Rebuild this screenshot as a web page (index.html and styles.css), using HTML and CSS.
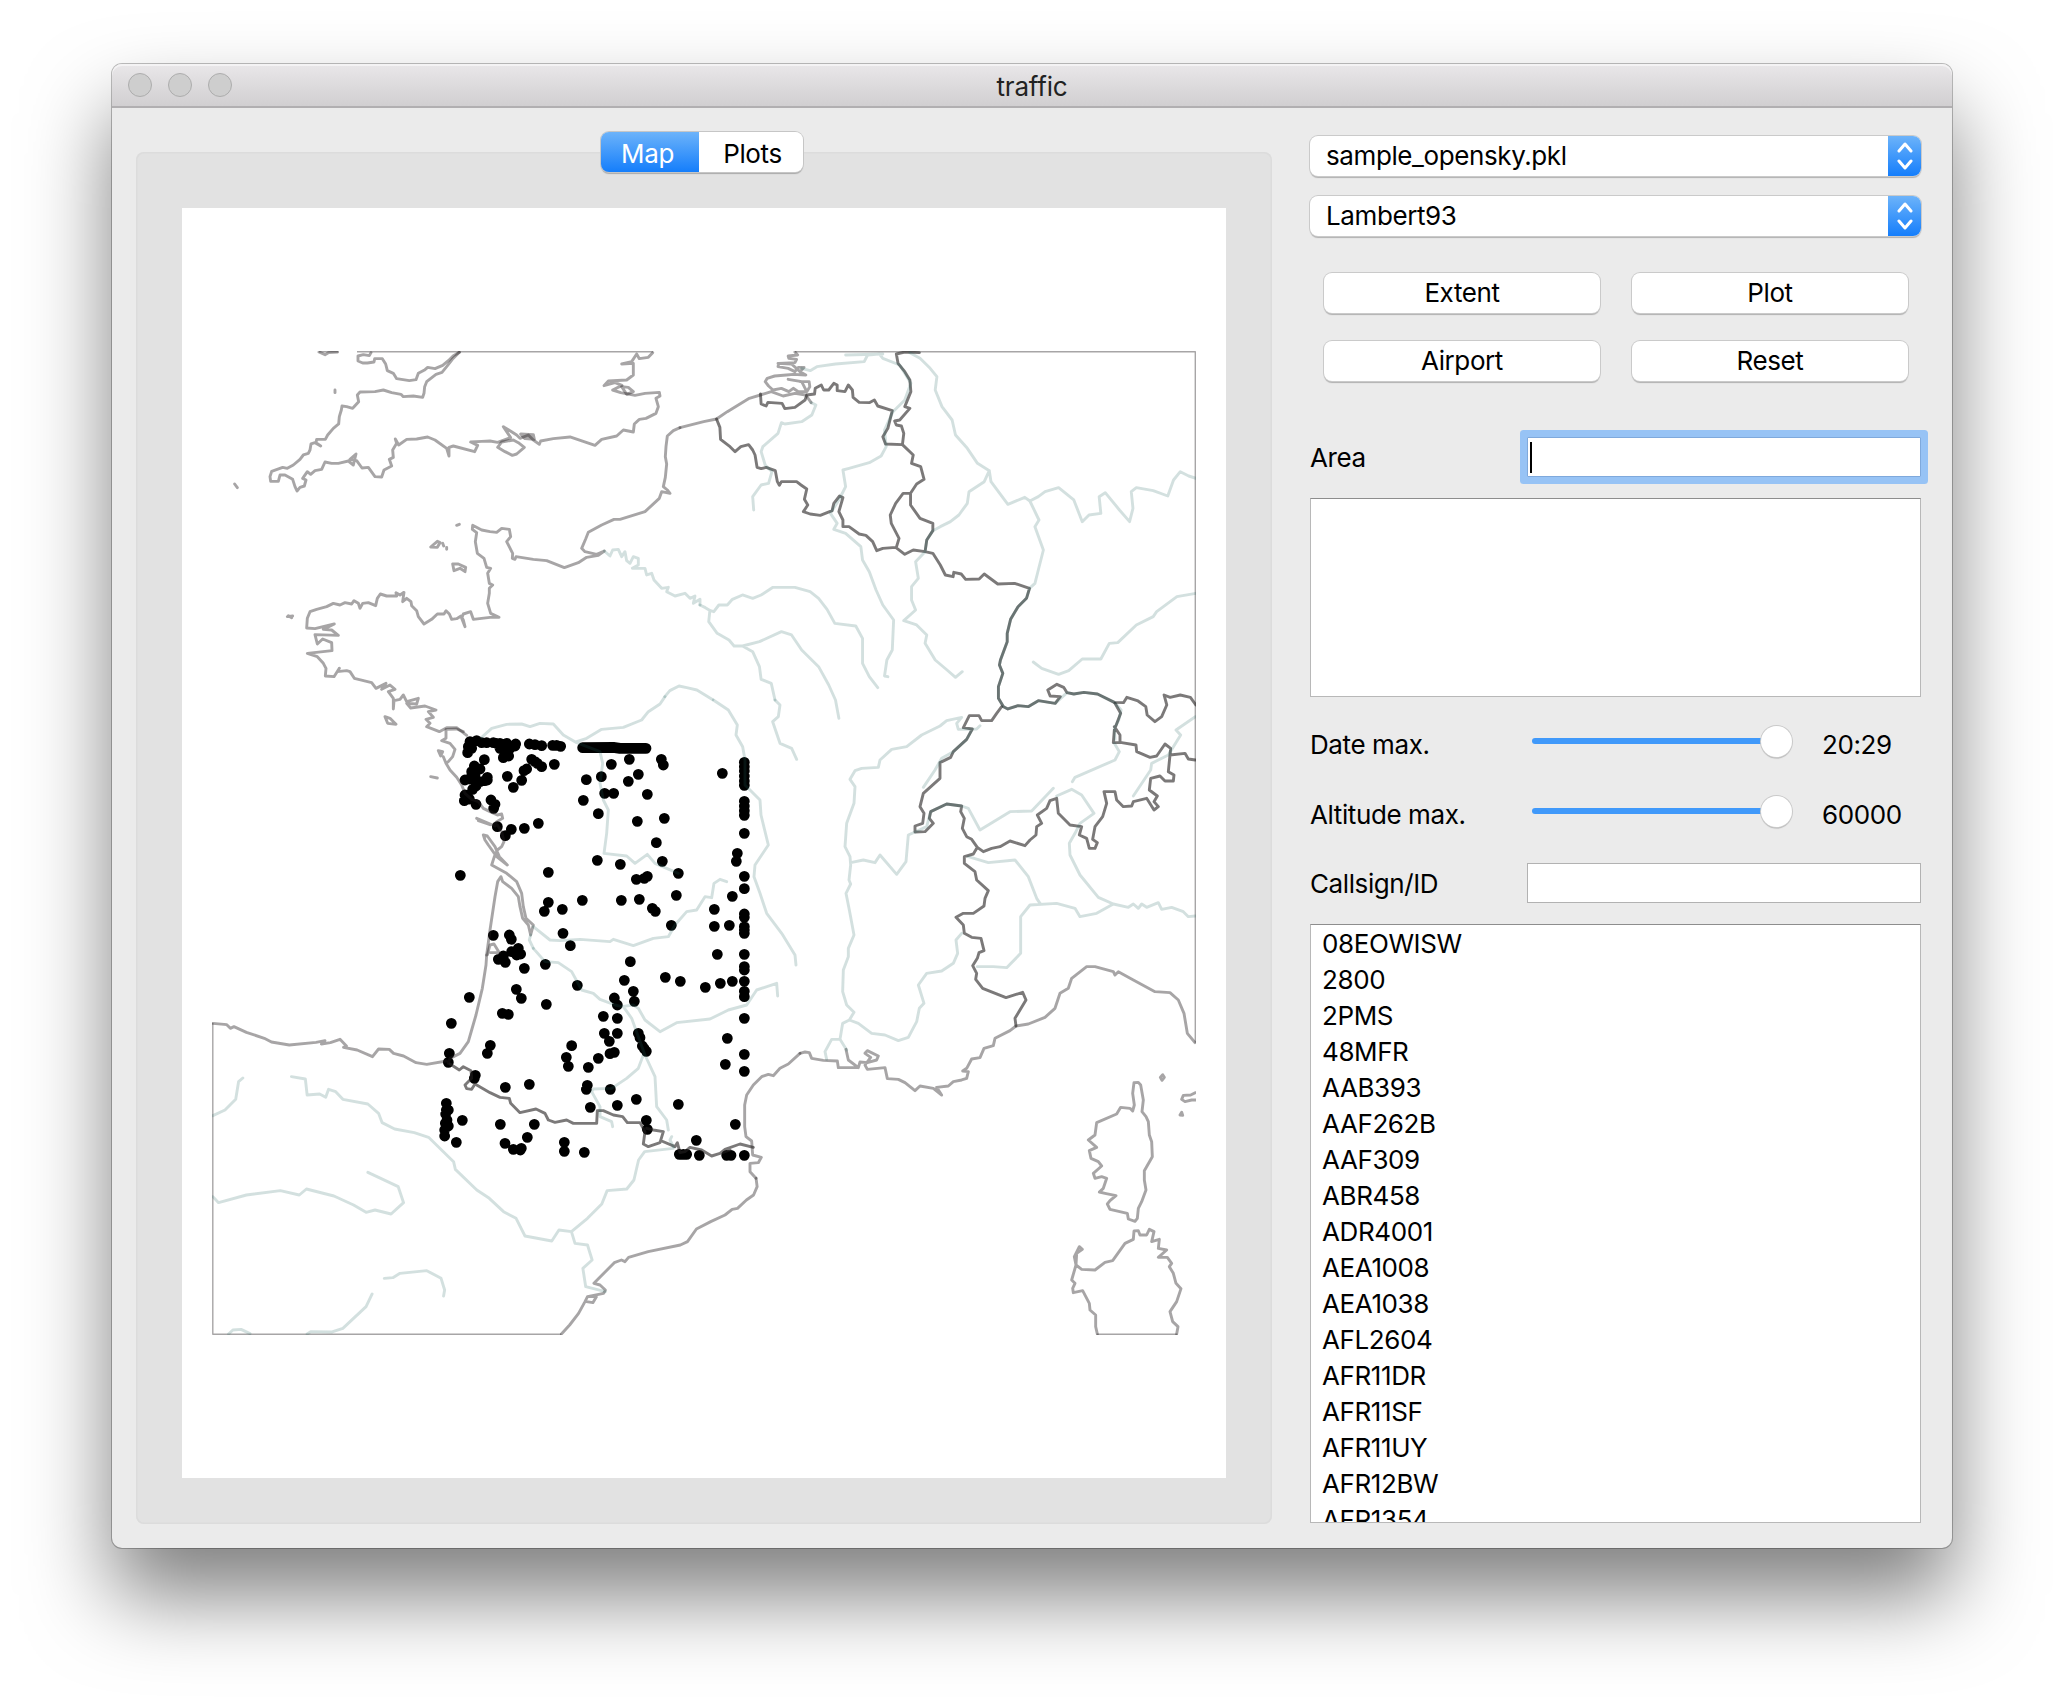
FILE: index.html
```html
<!DOCTYPE html>
<html lang="en">
<head>
<meta charset="utf-8">
<title>traffic</title>
<link rel="stylesheet" href="styles.css">
</head>
<body>
<main class="window">
  <header class="titlebar">
    <div class="lights"><i class="light"></i><i class="light"></i><i class="light"></i></div>
    <h1 class="title">traffic</h1>
  </header>
  <div class="content">
    <section class="left">
      <nav class="tabs"><span class="tab tab-on">Map</span><span class="tab tab-off">Plots</span></nav>
      <div class="panel">
        <svg class="map" viewBox="182 208 1044 1270">
          <defs><clipPath id="extent"><rect x="212" y="351" width="984" height="984"/></clipPath></defs>
          <g clip-path="url(#extent)">
            <g class="dots">
              <path transform="translate(400 700) scale(.33333)" d="M210 125h0M205 140h0M203 158h0M215 145h0M230 122h0M245 128h0M260 128h0M280 128h0M300 130h0M320 130h0M347 132h0M290 130h0M300 145h0M315 150h0M330 145h0M345 138h0M310 173h0M326 168h0M388 132h0M405 134h0M425 137h0M458 136h0M470 136h0M482 139h0M548 143L640 142 660 145 738 145M253 179h0M395 178h0M405 185h0M412 190h0M425 200h0M372 212h0M380 207h0M463 193h0M322 229h0M365 241h0M340 262h0M223 198h0M240 207h0M215 215h0M225 225h0M195 240h0M208 237h0M225 240h0M240 245h0M255 242h0M262 232h0M262 240h0M228 258h0M218 268h0M195 285h0M193 302h0M208 297h0M228 313h0M273 300h0M285 313h0M281 325h0M292 380h0M316 407h0M334 388h0M373 385h0M415 370h0M181 526h0M445 517h0M445 607h0M433 634h0M487 628h0M547 601h0M489 700h0M511 737h0M559 239h0M550 301h0M595 341h0M604 230h0M634 193h0M688 178h0M715 223h0M685 244h0M742 283h0M614 280h0M641 280h0M712 364h0M793 355h0M769 428h0M784 178h0M790 195h0M787 484h0M592 481h0M661 493h0M709 538h0M733 535h0M742 529h0M835 520h0M829 586h0M664 601h0M718 598h0M757 625h0M766 634h0M814 676h0M967 220h0M1033 187h0M1033 200h0M1033 213h0M1033 228h0M1033 243h0M1033 256h0M1033 304h0M1033 318h0M1033 332h0M1033 346h0M1033 400h0M1033 529h0M1033 566h0M1033 642h0M1033 652h0M1033 680h0M1033 690h0M1033 700h0M1033 763h0M1012 460h0M1009 484h0M997 589h0M943 628h0M943 679h0M988 676h0M952 763h0M280 706h0M328 705h0M334 718h0"/>
              <path transform="translate(400 940) scale(.33333)" d="M355 25h0M335 35h0M350 45h0M362 42h0M310 48h0M295 58h0M316 67h0M310 55h0M373 85h0M436 73h0M532 136h0M349 148h0M364 175h0M307 220h0M325 223h0M439 193h0M208 172h0M154 250h0M148 340h0M145 367h0M271 316h0M262 340h0M226 406h0M223 415h0M316 442h0M388 433h0M515 317h0M499 352h0M505 379h0M691 65h0M673 121h0M700 154h0M703 184h0M643 174h0M652 195h0M610 229h0M652 235h0M613 280h0M652 280h0M628 304h0M630 341h0M643 337h0M595 355h0M565 382h0M562 436h0M559 448h0M631 448h0M571 502h0M652 496h0M709 478h0M835 493h0M715 280h0M720 293h0M727 318h0M732 325h0M739 334h0M739 541h0M742 568h0M796 112h0M841 124h0M916 142h0M961 130h0M997 124h0M1033 80h0M1033 90h0M1033 124h0M1033 154h0M1033 170h0M1033 235h0M1033 343h0M1033 394h0M982 295h0M976 373h0M1006 553h0M889 601h0M838 643h0M850 643h0M860 643h0M898 646h0M980 646h0M993 646h0M1033 646h0M139 490h0M139 510h0M145 510h0M137 522h0M141 540h0M136 550h0M145 558h0M134 570h0M134 588h0M187 541h0M169 607h0M301 553h0M403 553h0M382 592h0M315 610h0M340 628h0M361 630h0M364 625h0M493 607h0M493 634h0M553 637h0"/>
            </g>
            <path class="frame" d="M319 351.7H338M357 351.7H653M795 351.7H1195.3V1042.7M212.8 1023V1334.2H561.4M1096.7 1334.2H1177.3"/>
            <g class="coast">
              <g transform="translate(200 340) scale(.33333)">
                <path d="M778 37L760 47 745 62 728 76 705 86 683 82 675 89 655 100 648 119 628 122 590 116 580 100 562 92 557 72 547 56 524 56 522 66 502 69 488 69 474 63 474 48 490 44 508 47 513 38"/>
                <path d="M778 37L757 58 740 80 726 97 708 103 680 125 674 140 672 160 668 172 640 168 610 170 603 163 575 158 550 150 525 155 480 156 472 165 476 185 458 205 440 200 426 198 424 210 418 230 416 252 400 265 383 285 376 298 350 298 348 308 362 318 345 308 333 312 330 330 325 340 310 345 300 358 280 375 262 385 248 382 215 394 210 410 212 424 235 424 240 405 255 405 278 418 285 440 291 453 300 442 313 438 318 420 308 415 322 395 332 403 345 392 365 388 375 366 395 370 415 370 445 363 460 375 468 342 450 358 470 362 486 384 505 382 525 410 545 411 552 390 575 378 568 358 580 352 578 330 590 310 586 297 596 315 620 298 650 297 683 291 705 300 740 325 747 348 747 322 760 318 824 335 833 316 812 306 845 304 870 303 893 307 932 293 910 260 930 272 950 285 960 295 985 285 1000 300 1018 313 1022 303 1060 296 1110 291 1185 316 1205 298 1250 288 1270 270 1300 276 1303 252 1318 238 1338 235 1368 220 1375 200 1368 175 1380 168 1378 157 1335 160 1305 166 1262 158 1238 150 1266 136 1245 128 1212 137 1225 123 1280 120 1300 105 1300 70 1265 72 1295 65 1310 42 1318 56 1345 52 1358 38"/>
                <path d="M893 322L905 306 940 300 955 308 973 322 950 342 937 346 915 335ZM962 282L1000 284 1003 298 975 296ZM970 290H995M1265 140L1285 142 1300 155 1280 163ZM357 36L375 44 385 38 413 36M405 150V158M104 432L112 443M770 556L778 553M692 621L712 604 720 608 712 622ZM728 610l3 8M740 622v6M758 672L775 672 797 682 795 695 780 685 762 692ZM262 830L278 828M265 827L275 833M555 1130L570 1135 588 1153 563 1150Z"/>
                <path d="M1440 263L1420 272 1402 288 1398 320 1396 350 1400 372 1396 412 1390 440 1402 450 1410 460 1385 455 1378 475 1335 515 1260 538 1242 538 1205 555 1165 577 1157 597 1145 625 1155 635 1190 643 1213 633 1195 646 1160 652 1135 668 1093 683 1040 662 1000 658 948 650 945 658 937 655 938 640 920 605 932 590 928 568 905 565 890 577 870 575 845 570 818 556 817 568 830 578 826 605 832 640 852 655 860 682 872 685 863 700 868 730 878 735 868 745 868 760 863 790 872 820 897 832 870 832 820 838 812 815 790 822 785 835 795 860 790 840 783 828 770 836 755 838 748 822 738 812 732 822 712 822 695 838 672 852 655 830 650 812 635 797 633 785 620 775 608 785 612 757 600 765 588 758 590 768 560 768 541 762 532 775 527 797 505 788 488 790 480 805 475 790 462 782 455 792 435 788 420 795 400 790 380 800 350 808 330 815 322 835 320 864 345 866 403 852 370 868 395 870 415 886 345 884 352 912 368 897 395 908 396 932 322 940 352 950 370 970 378 985 376 1008 402 1010 418 985 412 995 440 992 450 995 463 1015 515 1028 528 1045 558 1030 545 1048 570 1035 585 1048 565 1055 580 1075 580 1107 582 1082 600 1078 610 1065 620 1085 655 1075 650 1092 620 1090 632 1104 675 1098 708 1110 685 1115 700 1132 678 1138 690 1150 680 1160 718 1175 740 1163 770 1163 800 1186"/>
              </g>
              <path transform="translate(680 340) scale(.33803 .33333)" d="M0 263L70 245 108 237 140 215 205 175 270 155 305 168 340 160 372 165 388 188M340 36L348 45 320 48 322 55 345 58 340 68 292 70 290 80 320 85 340 95 350 82 367 82 355 95 372 105 335 103 315 105 280 108 258 115 252 125 262 138 275 150 300 145 322 155 335 145 350 155 375 155 360 125 320 118M355 125L382 125 384 140 375 155M290 70L330 72 355 95"/>
              <path transform="translate(400 700) scale(.33333)" d="M138 88L170 87 190 95M138 88L138 115 125 122 150 130 165 148 158 170 145 185 138 190 150 210 170 232 185 255 195 280 215 298 235 305 250 325 270 335 292 345 305 342 308 355 290 365 280 375M230 355L285 378M235 362L270 374M292 375L305 395 312 425 305 440 292 450 283 470 275 495 320 520 350 545 365 580 370 620 378 655 400 675 392 705 385 675 368 655 360 620 355 590 335 565 308 545 303 530 293 545 285 590 270 690 260 765M250 405L262 408 285 440 298 470 322 495 290 470 265 435 255 420ZM115 152L128 155 122 168ZM138 190L130 170M92 230L112 234"/>
              <path transform="translate(400 940) scale(.33333)" d="M260 45L258 75 247 145 228 225 215 270 205 305 180 340 150 355 145 370M262 45L270 15 282 12 298 38 272 38M1200 340L1165 372 1140 385 1120 407 1105 403 1085 410 1060 435 1040 465 1034 495 1034 560 1038 590 1055 603 1058 645 1084 652 1075 668 1050 670 1050 695 1068 715"/>
              <path transform="translate(200 1000) scale(.35714 .33333)" d="M36 70L75 74 85 85 95 80 130 97 180 115 200 126 250 135 325 127 350 122 340 132 365 128 392 118 410 138 402 142 440 150 483 170 500 147 530 148 542 160 570 168 605 188 635 193 690 183M1557 535L1560 560 1550 585 1530 600 1505 625 1490 628 1470 645 1430 665 1390 687 1365 725 1345 735 1255 755 1200 772 1190 785 1180 780 1160 788 1103 850 1120 855 1135 870 1130 880 1085 890 1078 905 1060 940 1035 975 1012 1002M1085 890L1110 890 1100 908 1082 905"/>
              <path transform="translate(780 680) scale(.33333)" d="M60 1120L75 1116 88 1118 95 1135 130 1141 172 1143 175 1163 235 1163 205 1140 198 1108M235 1163L240 1146 262 1148 290 1140 295 1128 262 1112 255 1120 272 1132 255 1155 262 1168 315 1163 322 1196 355 1198 375 1208 405 1232 420 1218 460 1225 485 1245 470 1222 505 1218 520 1205 545 1200 560 1195 565 1175 548 1173 560 1165 575 1137 600 1133 612 1105 640 1097 645 1075 690 1052 708 1038 745 1032 795 1012 825 985 840 940 865 925 875 895 920 860 945 860 1000 875 1005 885 1015 875 1060 900 1125 935 1170 938 1195 960 1212 1000 1222 1060 1245 1088"/>
              <path transform="translate(1030 1050) scale(.33333)" d="M312 98L325 97 332 105 340 150 336 185 348 200 355 215 358 255 365 275 367 320 343 362 343 390 348 420 335 455 325 475 322 505 315 514 295 507 292 490 240 478 232 462 240 452 258 437 225 430 208 426 220 415 230 385 215 380 195 385 190 370 215 348 205 335 183 325 178 302 200 292 175 270 195 255 200 218 260 192 272 172 300 175 308 183 313 165 308 130ZM202 852L197 830 197 795 180 780 178 760 158 722 130 728 128 715 135 700 125 690 138 645 133 620 148 590 157 598 140 610 138 645 155 658 195 660 225 637 248 632 285 580 310 568 312 543 325 542 330 555 350 555 358 538 372 545 365 575 388 568 385 595 410 600 385 622 412 622 425 640 418 650 430 670 438 700 453 716 440 755 420 785 428 815 444 830 440 852M391 82L398 74 403 82 396 91ZM497 128L482 135 460 136 455 148 465 155 485 150 497 150M450 195L455 187 458 196Z"/>
            </g>
            <g class="border">
              <path transform="translate(680 340) scale(.33803 .33333)" d="M108 237L118 262 120 298 148 320 163 335 180 320 203 314 215 330 222 345 228 382 240 386 255 382 282 392 288 425 294 436 300 425 345 425 358 435 375 447 368 478 378 495 365 515 385 522 415 526 450 512 455 490 472 468 482 473 470 515 482 540 482 560 500 560 530 582 550 586 570 605 582 632 600 625 638 622 665 643 690 630 725 635 748 640 770 675 785 705 808 710 810 697 832 702 845 718 885 717 900 702 940 732 990 730 1034 745 1025 775 1000 800 978 838 968 880 968 905 948 960 945 975 955 1000 942 1040 942 1075 957 1100 970 1107 1000 1097 1030 1100 1060 1082 1110 1090 1125 1070 1095 1068 1088 1050 1115 1033 1135 1042 1145 1058 1165 1062 1195 1057 1235 1062 1285 1087 1312 1088 1322 1072 1355 1083 1378 1100 1382 1125 1405 1145 1425 1130 1440 1095 1432 1065 1450 1072 1480 1065 1510 1072 1526 1095M238 162L240 192 255 198 260 187 302 190 310 206 340 202 370 180 375 165 398 162 400 145 418 135 425 150 440 150 455 130 465 135 465 152 488 155 498 135 510 150 512 172 530 187 560 188 575 180 585 198 628 212 615 265 600 290 608 312 658 314 662 280 655 258 640 255 635 243 650 240 680 205 665 200 683 155 680 120 665 95 645 70 640 42 665 36 708 38M658 314L690 345 685 370 712 380 722 418 700 432 682 460 660 460 638 490 622 525 625 550 648 595 640 622M682 460L682 495 710 535 748 550 748 572 730 600 725 635"/>
              <path transform="translate(780 680) scale(.33333)" d="M665 80L650 100 635 122 605 122 597 107 568 107 550 143 577 147 560 178 520 215 512 232 480 248 480 295 430 340 420 380 432 400 428 430 405 438 405 456 435 455 460 430 448 415 452 395 500 372 545 378 542 395 553 415 547 445 560 470 575 478 592 502 610 515 635 505 660 500 690 483 735 497 750 480 768 465 770 440 785 430 772 405 800 385 810 362 830 355 835 400 870 435 905 440 898 465 920 475 928 505 945 505 952 488 938 478 945 440 968 410 980 370 972 335 1005 335 1010 360 1030 380 1055 378 1060 365 1100 355 1122 390 1135 380 1122 365 1132 348 1108 330 1112 295 1140 288 1155 303 1180 303 1182 285 1165 275 1170 225 1172 205 1155 192 1130 228 1110 232 1070 215 1068 195 1025 188 1000 188 1003 150 1022 100 1005 70M1003 140L1020 165 1020 187M1170 225L1215 220 1225 237 1246 240M592 502L580 522 553 530 553 550 585 575 590 600 625 632 615 655 612 678 580 700 550 700 528 712 550 735 553 760 575 772 603 775 612 812 597 818 592 835 578 857 590 880 587 898 608 925 678 953 728 937 738 960 705 1015 708 1038"/>
              <path transform="translate(400 940) scale(.33333)" d="M150 372L178 390 190 380 213 392 215 415 195 435 200 446 215 448 225 432 270 458 300 472 328 475 332 490 360 518 408 507 435 520 445 540 465 547 500 540 520 550 560 550 590 550 592 512 610 512 640 525 668 530 682 548 720 548 735 575 730 612 745 620 780 608 790 575 760 570 740 565M785 603L825 620 832 608 840 638 855 635 870 622 905 630 935 648 960 640 975 628 1020 612 1060 622M960 640L990 630"/>
            </g>
            <g class="river">
              <path transform="translate(200 340) scale(.33333)" d="M1213 633L1230 648 1238 630 1255 628 1265 650 1275 635 1280 662 1290 670 1300 650 1315 655 1315 675 1297 685 1335 685 1340 705 1355 700 1362 720 1385 745 1405 742 1400 755 1425 768 1455 760 1470 775 1485 768 1480 790 1500 778 1500 795"/>
              <path transform="translate(680 340) scale(.33803 .33333)" d="M59 795L75 803 90 812 100 815 115 795 140 795 155 778 185 765 215 775 240 765 275 742 340 742 385 755 410 775 435 808 458 850 520 858 540 895 540 970 560 1010 585 1043M88 815L85 845 110 880 145 900 160 918 185 918 235 905 300 875 330 885 360 930 410 980 440 1035 460 1080 470 1135M185 918L215 935 235 980 240 1018 270 1030 281 1080M-45 1070L-30 1052 -3 1038 20 1043 50 1050 97 1079M615 1010L605 1008 612 960 628 930 632 840 600 795 580 750 560 695 540 660 535 620 490 580 455 568 465 550 445 520 470 480 490 440 482 390 500 385 560 368 595 348 610 320 605 270 630 215 665 180 683 130 650 75 600 55 590 42 555 45 545 65 460 72 405 80 385 92 360 85M490 45L600 42M388 188L402 195 390 225 360 245 310 252 300 248 290 280 245 320 240 335 252 375 272 395 262 430 240 435 215 470 218 510M680 38L710 55 740 85 760 110 755 150 775 200 805 240 815 285 850 325 880 370 915 392 920 425 970 493 1020 472 1035 483 1062 540 1050 560 1075 630 1060 690 1050 730 1034 745 1025 775 1000 800 978 838 968 880 968 905 948 960 945 975 955 1000 942 1040 942 1075 957 1100 970 1107 1000 1097 1030 1100 1060 1082 1110 1090 1145 1058 1165 1062 1195 1057 1235 1062 1285 1087 1305 1110 1298 1140 1285 1165 1287 1198M1035 483L1060 470 1080 455 1120 443 1165 480 1190 545 1210 525 1245 520 1240 470 1258 458 1300 510 1330 545 1340 505 1335 455 1350 443 1400 452 1443 468 1460 420 1480 395 1505 408 1526 415M915 392L900 425 855 455 850 490 825 525 800 545 770 560 748 572 730 600 725 635 697 665 705 715 685 740 685 780 697 810 662 842 700 855 730 885 725 910 755 960 790 990 815 1012 835 995M1045 966L1070 985 1120 1003 1150 992 1190 957 1245 957 1270 910 1295 908 1350 855 1400 830 1410 815 1470 770 1526 760"/>
              <path transform="translate(400 700) scale(.33333)" d="M245 112L275 85 320 73 365 72 390 80 420 70 460 72 490 105 530 128 600 155 608 190 600 250 610 300 625 330 620 400 612 460 680 468 705 490 742 463 765 490 835 520M530 125L560 115 605 88 670 82 725 60 745 35 780 12 795 -10M940 0L985 30 1012 75 1008 105 1028 140 1035 180 1035 255 1080 300 1083 345 1105 435 1065 495 1062 530 1080 580 1100 640 1145 700 1185 765 1188 795M1125 0L1140 15 1135 50 1118 65 1140 130 1175 145 1190 178M400 680L450 720 480 722 540 718 630 725 640 718 700 737 760 715 805 710 825 675 860 635 890 630 915 590 935 593 942 550 960 538 980 545M392 705L388 720 400 745"/>
              <path transform="translate(400 940) scale(.33333)" d="M400 25L435 65 475 68 515 95 545 150 580 160 600 178 645 195 665 200 700 195 715 205 735 240 780 275 830 248 930 237 985 210 1040 195 1070 150 1130 130 1133 168M670 200L695 235 715 290 735 345 765 410 770 500 800 540 805 570M730 345L715 385 680 415 635 445 580 447 575 455 600 500 600 530 635 545 638 560M815 590L810 600 820 620"/>
              <path transform="translate(200 1000) scale(.35714 .33333)" d="M36 347L70 330 100 298 108 245 120 234M256 230L295 237 300 285 335 282 352 292 360 268 380 275 400 298 470 312 500 340 510 368 545 387 600 398 640 412 710 485 715 508 775 570 810 595 850 635 885 655 910 708 985 723 1005 690 1040 695 1050 730 1085 735 1098 780 1072 805 1080 860 1135 875M1325 445L1245 455 1228 480 1215 540 1195 567 1140 572 1125 612 1085 655 1040 695M36 590L52 608 130 585 225 572 278 585 298 567 375 588 430 615 465 637 490 630 535 642 570 608 555 560 500 532 470 517M516 835L540 833 560 820 635 812 675 835 685 870 682 888M482 882L465 920 400 985 370 996 310 995 300 1002M80 1002L92 990 115 988 140 1001"/>
              <path transform="translate(780 680) scale(.33333)" d="M600 137L590 147 535 148 530 130 545 112 500 122 480 138 425 165 380 200 335 208 300 240 295 262 245 265 225 272 210 298 225 320 222 370 200 430 195 500 210 530 212 555 207 600 212 612 198 640 208 690 222 765 205 805 205 830 190 870 188 935 200 975 222 997 208 1020 188 1030 180 1078 155 1078 135 1115 140 1138M180 1078L200 1110M208 1020L235 1030 275 1060 315 1065 355 1082 385 1072 410 1025 418 985 432 970 415 915 440 880 485 873 520 850 533 820 528 780 545 760M212 548L250 540 285 548 300 525 350 583 378 545 385 465 405 456 440 440 452 395 500 372 545 378 565 385 600 450 690 395 755 393 820 325M430 322L465 270 485 235 520 215 560 178 577 147M830 348L875 328 905 345 942 400 900 430 885 460 868 490 870 525 900 585 955 652 1000 672M565 530L625 548 705 540 745 590 770 655 780 670M592 860L640 860 680 863 722 820 722 710 750 675 830 670 885 685 900 710 950 700 1000 672 1045 682 1060 672 1075 685 1085 672 1100 682 1135 668 1145 688 1175 682 1210 695 1225 710 1246 708M877 305L885 292 1005 240 1018 215 1003 190M1060 348L1112 270 1115 250 1165 225 1202 165 1188 150 1246 110"/>
            </g>
          </g>
        </svg>
      </div>
    </section>
    <section class="right">
      <div class="combo"><span class="combo-text">sample_opensky.pkl</span><span class="stepper"><svg class="chevrons" viewBox="0 0 16 32"><path d="M2 11L8 4L14 11M2 21L8 28L14 21"/></svg></span></div>
      <div class="combo"><span class="combo-text">Lambert93</span><span class="stepper"><svg class="chevrons" viewBox="0 0 16 32"><path d="M2 11L8 4L14 11M2 21L8 28L14 21"/></svg></span></div>
      <div class="buttons">
        <span class="button">Extent</span><span class="button">Plot</span>
        <span class="button">Airport</span><span class="button">Reset</span>
      </div>
      <div class="row row-area"><span class="label">Area</span><div class="field field-focus"><i class="caret"></i></div></div>
      <div class="box box-empty"></div>
      <div class="row row-date"><span class="label label-low">Date max.</span><div class="slider"><i class="track"></i><i class="knob"></i></div><span class="value">20:29</span></div>
      <div class="row row-alt"><span class="label label-low">Altitude max.</span><div class="slider"><i class="track"></i><i class="knob"></i></div><span class="value">60000</span></div>
      <div class="row row-call"><span class="label">Callsign/ID</span><div class="field"></div></div>
      <div class="box list">
        <div class="item">08EOWISW</div><div class="item">2800</div><div class="item">2PMS</div><div class="item">48MFR</div><div class="item">AAB393</div><div class="item">AAF262B</div><div class="item">AAF309</div><div class="item">ABR458</div><div class="item">ADR4001</div><div class="item">AEA1008</div><div class="item">AEA1038</div><div class="item">AFL2604</div><div class="item">AFR11DR</div><div class="item">AFR11SF</div><div class="item">AFR11UY</div><div class="item">AFR12BW</div><div class="item">AFR1354</div>
      </div>
    </section>
  </div>
</main>
</body>
</html>
```
FILE: styles.css
```css
* { box-sizing: border-box; }
html, body { margin: 0; height: 100%; }
body {
  background: #fff;
  padding: 64px 112px 0;
  overflow: hidden;
  font: 400 26px/36px Inter, "Liberation Sans", sans-serif;
  letter-spacing: -0.4px;
  color: #000;
}
.window {
  width: 1840px;
  height: 1484px;
  display: flex;
  flex-direction: column;
  background: #ebebeb;
  border-radius: 10px;
  box-shadow: 0 0 0 1px rgba(0,0,0,.25), 0 48px 84px rgba(0,0,0,.5);
}
.titlebar {
  height: 44px;
  flex: none;
  display: grid;
  grid-template-columns: 1fr auto 1fr;
  align-items: center;
  padding: 0 16px;
  border-radius: 10px 10px 0 0;
  border-bottom: 2px solid #b1afb1;
  background: linear-gradient(#e9e7e9, #d1cfd1);
  box-shadow: inset 0 2px 0 #f4f3f4;
}
.lights { display: flex; gap: 16px; }
.light { width: 24px; height: 24px; border-radius: 50%; background: #cecece; border: 1.5px solid #adadad; }
.title { margin: 0; padding-top: 4px; font-size: 26px; font-weight: 400; color: #222; letter-spacing: -.2px; }
.content { flex: 1; display: flex; padding: 24px 31px 24px 24px; gap: 38px; min-height: 0; }
.left { width: 1136px; flex: none; display: flex; flex-direction: column; align-items: center; }
.tabs { display: flex; height: 40px; width: 202px; margin-left: -4px; z-index: 1; border-radius: 8px; overflow: hidden; box-shadow: 0 0 0 1px #c6c6c6, 0 2px 1px rgba(0,0,0,.25); }
.tab { display: flex; align-items: center; justify-content: center; padding-top: 4px; height: 40px; }
.tab-on { width: 98px; padding-right: 5px; color: #fff; background: linear-gradient(#6cb3fa, #157efb); }
.tab-off { width: 104px; padding-left: 3px; background: #fff; }
.panel { width: 1136px; flex: 1; margin-top: -20px; padding: 56px 46px 46px; background: #e2e2e2; border-radius: 8px; box-shadow: inset 0 0 0 1.5px #dcdcdc; }
.map { display: block; width: 1044px; height: 1270px; background: #fff; }
.map path { fill: none; stroke-linecap: round; stroke-linejoin: round; vector-effect: non-scaling-stroke; }
.dots path { stroke: #000; stroke-width: 10.8px; }
.map .frame { stroke: #a7a5a6; stroke-width: 1.4px; stroke-linecap: butt; }
.coast path { stroke: #231f20; stroke-opacity: .4; stroke-width: 2.9px; }
.border path { stroke: #231f20; stroke-opacity: .6; stroke-width: 2.9px; }
.river path { stroke: #226660; stroke-opacity: .2; stroke-width: 2.9px; }
.right { width: 611px; flex: none; padding-top: 4px; display: flex; flex-direction: column; }
.combo { height: 40px; flex: none; display: flex; margin-bottom: 20px; background: #fff; border-radius: 8px; overflow: hidden; box-shadow: 0 0 0 1px #cacaca, 0 1.5px 1px rgba(0,0,0,.25); }
.combo-text { flex: 1; padding: 2px 0 0 16px; }
.stepper { width: 33px; display: flex; align-items: center; justify-content: center; background: linear-gradient(#6cb3fa, #157efb); }
.chevrons { width: 16px; height: 32px; fill: none; stroke: #fff; stroke-width: 3px; stroke-linecap: round; stroke-linejoin: round; }
.buttons { margin-top: 17px; padding: 0 13px 0 14px; display: grid; grid-template-columns: 276px 276px; justify-content: space-between; row-gap: 28px; }
.button { height: 40px; padding-top: 2px; text-align: center; background: #fff; border-radius: 8px; box-shadow: 0 0 0 1px #cacaca, 0 1.5px 1px rgba(0,0,0,.25); }
.row { display: flex; flex: none; align-items: center; }
.row-area { margin-top: 56px; }
.row-date { margin-top: 28px; }
.row-alt { margin-top: 38px; }
.row-call { margin-top: 36px; }
.label { width: 217px; padding-top: 2px; }
.label-low { padding-top: 7px; line-height: 25px; }
.field { width: 394px; height: 40px; background: #fff; border: 1.5px solid #b2b2b2; padding: 4px 2px; }
.field-focus { border-color: #7fa9dc; box-shadow: 0 0 0 7px #97c3f5; border-radius: 1px; }
.caret { display: block; width: 2px; height: 31px; background: #000; }
.box { background: #fff; border: 1.5px solid #b8b8b8; border-top-color: #8d8d8d; flex: none; }
.box-empty { margin-top: 21px; height: 199px; }
.slider { width: 261px; height: 32px; padding-left: 5px; display: flex; align-items: center; }
.track { width: 232px; flex: none; height: 6px; border-radius: 3px 0 0 3px; background: #4099fa; }
.knob { width: 31px; height: 31px; flex: none; margin-left: -3px; border-radius: 50%; background: #fff; box-shadow: 0 0 0 1px #cacaca, 0 1.5px 1px rgba(0,0,0,.25); }
.value { padding: 7px 0 0 34px; line-height: 25px; }
.list { margin-top: 21px; height: 599px; padding: 1px 0 0 11px; overflow: hidden; }
.item { height: 36px; }
```
